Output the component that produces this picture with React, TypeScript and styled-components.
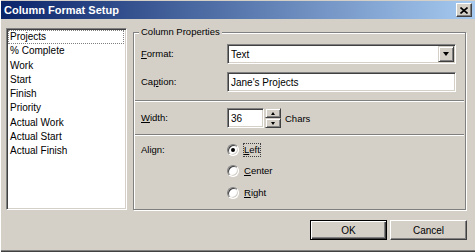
import React from "react";
import styled, { createGlobalStyle } from "styled-components";

const GlobalStyle = createGlobalStyle`
  html, body {
    margin: 0;
    padding: 0;
    background: #d4d0c8;
  }
  body {
    font-family: "Liberation Sans", Arial, sans-serif;
    color: #000;
  }
`;

const Window = styled.div`
  width: 475px;
  height: 252px;
  box-sizing: border-box;
  padding: 1px 0 0 1px;
  background: #d4d0c8;
  display: flex;
  flex-direction: column;
  box-shadow: inset 1px 0 0 #fff, inset 0 -1px 0 #404040, inset 0 -2px 0 #808080;
`;

const TitleBar = styled.div`
  height: 18px;
  display: flex;
  align-items: center;
  justify-content: space-between;
  padding: 0 3px 0 3px;
  background: linear-gradient(to right, #0a246a, #a6caf0);
  color: #fff;
  font-weight: bold;
  font-size: 11px;
`;

const CloseButton = styled.div`
  width: 16px;
  height: 14px;
  box-sizing: border-box;
  background: #d4d0c8;
  border: 1px solid;
  border-color: #fff #404040 #404040 #fff;
  box-shadow: inset -1px -1px 0 #808080;
  display: flex;
  align-items: center;
  justify-content: center;
`;

const Body = styled.div`
  flex: 1;
  display: flex;
  flex-direction: column;
  padding: 9px 9px 0 5px;
`;

const Main = styled.div`
  display: flex;
  gap: 6px;
  height: 182px;
`;

const ListBox = styled.div`
  width: 121px;
  height: 182px;
  box-sizing: border-box;
  background: #fff;
  border: 1px solid;
  border-color: #808080 #fff #fff #808080;
  box-shadow: inset 1px 1px 0 #404040, inset -1px -1px 0 #d4d0c8;
  padding: 1px 2px 0 1px;
`;

const ListItem = styled.div<{ $focused?: boolean }>`
  font-size: 10px;
  line-height: 14.25px;
  height: 14.25px;
  padding-left: 2px;
  white-space: nowrap;
  outline: ${(p) => (p.$focused ? "1px dotted #808080" : "none")};
  outline-offset: -1px;
`;

const GroupBox = styled.div`
  flex: 1;
  margin-top: 4px;
  height: 178px;
  box-sizing: border-box;
  position: relative;
  border: 1px solid #808080;
  box-shadow: inset 1px 1px 0 #fff, 1px 1px 0 #fff;
`;

const Legend = styled.div`
  position: absolute;
  top: -7px;
  left: 5px;
  padding: 0 2px;
  background: #d4d0c8;
  font-size: 9.5px;
  line-height: 12px;
`;

const Section = styled.div<{ $pt: number; $pb: number }>`
  display: flex;
  flex-direction: column;
  gap: 8px;
  padding: ${(p) => `${p.$pt}px 9px ${p.$pb}px 7px`};
`;

const Separator = styled.div`
  border-top: 1px solid #808080;
  border-bottom: 1px solid #fff;
  margin: 0 1px;
`;

const FieldRow = styled.div<{ $align?: string }>`
  display: grid;
  grid-template-columns: 86px 1fr;
  align-items: ${(p) => p.$align || "center"};
  min-height: 20px;
`;

const Label = styled.div`
  font-size: 9.5px;
  line-height: 12px;
`;

const Key = styled.span`
  text-decoration: underline;
  text-underline-offset: 1px;
`;

const Sunken = styled.div<{ $w?: number }>`
  width: ${(p) => (p.$w ? `${p.$w}px` : "100%")};
  height: 20px;
  box-sizing: border-box;
  background: #fff;
  border: 1px solid;
  border-color: #808080 #fff #fff #808080;
  box-shadow: inset 1px 1px 0 #404040, inset -1px -1px 0 #d4d0c8;
  display: flex;
  align-items: center;
  justify-content: space-between;
  padding-left: 3px;
  font-size: 10px;
`;

const Raised = styled.div<{ $w: number; $h: number }>`
  width: ${(p) => p.$w}px;
  height: ${(p) => p.$h}px;
  box-sizing: border-box;
  background: #d4d0c8;
  border: 1px solid;
  border-color: #d4d0c8 #404040 #404040 #d4d0c8;
  box-shadow: inset 1px 1px 0 #fff, inset -1px -1px 0 #808080;
  display: flex;
  align-items: center;
  justify-content: center;
`;

const DropArrow = styled.div`
  width: 0;
  height: 0;
  border-left: 3.5px solid transparent;
  border-right: 3.5px solid transparent;
  border-top: 4px solid #000;
`;

const SpinArrow = styled.div<{ $up?: boolean }>`
  width: 0;
  height: 0;
  border-left: 2.5px solid transparent;
  border-right: 2.5px solid transparent;
  ${(p) => (p.$up ? "border-bottom: 3px solid #000;" : "border-top: 3px solid #000;")}
`;

const SpinRow = styled.div`
  display: flex;
  align-items: center;
`;

const Spinner = styled.div`
  display: flex;
  flex-direction: column;
  margin-left: 1px;
`;

const Unit = styled.span`
  margin-left: 4px;
  font-size: 9.5px;
`;

const RadioList = styled.div`
  display: flex;
  flex-direction: column;
`;

const RadioRow = styled.div`
  display: flex;
  align-items: center;
  height: 21.5px;
  gap: 4px;
`;

const RadioCircle = styled.div<{ $checked?: boolean }>`
  width: 12px;
  height: 12px;
  box-sizing: border-box;
  border-radius: 50%;
  border: 1px solid;
  border-color: #808080 #fff #fff #808080;
  box-shadow: inset 1px 1px 0 #404040, inset -1px -1px 0 #d4d0c8;
  background: #fff;
  display: flex;
  align-items: center;
  justify-content: center;
  &::after {
    content: "";
    width: 4px;
    height: 4px;
    border-radius: 50%;
    background: ${(p) => (p.$checked ? "#000" : "transparent")};
  }
`;

const RadioLabel = styled.span<{ $focused?: boolean }>`
  font-size: 9.5px;
  line-height: 12px;
  padding: 1px 1px;
  outline: ${(p) => (p.$focused ? "1px dotted #404040" : "none")};
  outline-offset: -1px;
`;

const ButtonRow = styled.div`
  display: flex;
  justify-content: flex-end;
  gap: 3px;
  padding-top: 10px;
  margin-right: -1px;
`;

const Button = styled.div<{ $default?: boolean }>`
  width: 77px;
  height: 20px;
  box-sizing: border-box;
  display: flex;
  align-items: center;
  justify-content: center;
  font-size: 10px;
  background: #d4d0c8;
  border: 1px solid;
  border-color: ${(p) => (p.$default ? "#000" : "#fff #404040 #404040 #fff")};
  box-shadow: ${(p) =>
    p.$default
      ? "inset 1px 1px 0 #fff, inset -1px -1px 0 #404040, inset -2px -2px 0 #808080"
      : "inset -1px -1px 0 #808080"};
`;

const columns = [
  "Projects",
  "% Complete",
  "Work",
  "Start",
  "Finish",
  "Priority",
  "Actual Work",
  "Actual Start",
  "Actual Finish",
];

const aligns = [
  { key: "L", rest: "eft" },
  { key: "C", rest: "enter" },
  { key: "R", rest: "ight" },
];

function App() {
  return (
    <>
      <GlobalStyle />
      <Window>
        <TitleBar>
          <span>Column Format Setup</span>
          <CloseButton>
            <svg width="8" height="7" viewBox="0 0 8 7">
              <path d="M0.5 0.5 L7.5 6.5 M7.5 0.5 L0.5 6.5" stroke="#000" strokeWidth="1.6" />
            </svg>
          </CloseButton>
        </TitleBar>
        <Body>
          <Main>
            <ListBox>
              {columns.map((c, i) => (
                <ListItem key={c} $focused={i === 0}>
                  {c}
                </ListItem>
              ))}
            </ListBox>
            <GroupBox>
              <Legend>Column Properties</Legend>
              <Section $pt={11} $pb={8}>
                <FieldRow>
                  <Label>
                    <Key>F</Key>ormat:
                  </Label>
                  <Sunken>
                    <span>Text</span>
                    <Raised $w={16} $h={16} style={{ marginRight: 1 }}>
                      <DropArrow />
                    </Raised>
                  </Sunken>
                </FieldRow>
                <FieldRow>
                  <Label>
                    Ca<Key>p</Key>tion:
                  </Label>
                  <Sunken>Jane's Projects</Sunken>
                </FieldRow>
              </Section>
              <Separator />
              <Section $pt={6} $pb={6}>
                <FieldRow>
                  <Label>
                    <Key>W</Key>idth:
                  </Label>
                  <SpinRow>
                    <Sunken $w={37}>36</Sunken>
                    <Spinner>
                      <Raised $w={16} $h={10}>
                        <SpinArrow $up />
                      </Raised>
                      <Raised $w={16} $h={10}>
                        <SpinArrow />
                      </Raised>
                    </Spinner>
                    <Unit>Chars</Unit>
                  </SpinRow>
                </FieldRow>
              </Section>
              <Separator />
              <Section $pt={3} $pb={0}>
                <FieldRow $align="start">
                  <Label style={{ marginTop: 5 }}>Align:</Label>
                  <RadioList>
                    {aligns.map((a, i) => (
                      <RadioRow key={a.key}>
                        <RadioCircle $checked={i === 0} />
                        <RadioLabel $focused={i === 0}>
                          <Key>{a.key}</Key>
                          {a.rest}
                        </RadioLabel>
                      </RadioRow>
                    ))}
                  </RadioList>
                </FieldRow>
              </Section>
            </GroupBox>
          </Main>
          <ButtonRow>
            <Button $default>OK</Button>
            <Button>Cancel</Button>
          </ButtonRow>
        </Body>
      </Window>
    </>
  );
}

export default App;
